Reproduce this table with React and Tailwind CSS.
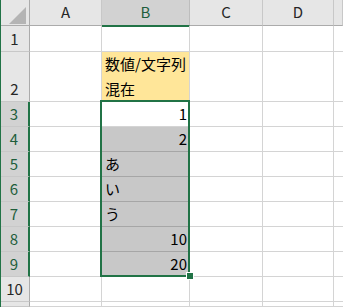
import React from "react";

const COLS = ["A", "B", "C", "D", ""];
const ROWS = [1, 2, 3, 4, 5, 6, 7, 8, 9, 10, 11];

// contents of column B, keyed by row number
const B = {
  2: { text: ["数値/文字列", "混在"], kind: "head" },
  3: { text: "1", num: true },
  4: { text: "2", num: true },
  5: { text: "あ" },
  6: { text: "い" },
  7: { text: "う" },
  8: { text: "10", num: true },
  9: { text: "20", num: true },
};

const selectedRow = (n) => n >= 3 && n <= 9;

function HeaderRow() {
  return (
    <>
      <div className="relative bg-[#e6e6e6] border-r border-b border-r-[#ababab] border-b-[#ababab]">
        <svg className="absolute left-[9px] top-[7px]" width="17" height="17" viewBox="0 0 17 17">
          <polygon points="17,0 17,17 0,17" fill="#b4b4b4" />
        </svg>
      </div>
      {COLS.map((c, i) => {
        const sel = c === "B";
        return (
          <div
            key={i}
            className={
              "flex items-center justify-center text-[15px] border-b border-r " +
              (sel
                ? "bg-[#d2d2d2] text-[#1e5e3b] border-r-[#bdbdbd] border-b-[#217346] shadow-[0_1px_0_#217346]"
                : "bg-[#e6e6e6] text-[#262626] border-r-[#c8c8c8] border-b-[#ababab]")
            }
          >
            {c}
          </div>
        );
      })}
    </>
  );
}

function BCell({ n }) {
  const d = B[n];
  const sel = n >= 4 && n <= 9;
  let bg = "";
  if (d && d.kind === "head") bg = "bg-[#ffe699]";
  else if (sel) bg = "bg-[#c8c8c8]";
  const line = sel && n < 9 ? "border-b-[#a6a6a6]" : "border-b-[#d4d4d4]";
  if (d && d.kind === "head") {
    return (
      <div className={"flex flex-col justify-end pl-[3px] text-[15px] leading-[25px] text-black border-r border-b border-r-[#d4d4d4] border-b-[#d4d4d4] " + bg}>
        {d.text.map((t) => (
          <div key={t}>{t}</div>
        ))}
      </div>
    );
  }
  return (
    <div
      className={
        "flex items-center text-[15px] text-black border-r border-b border-r-[#d4d4d4] " +
        line + " " + bg + " " +
        (d && d.num ? "justify-end pr-[2px]" : "justify-start pl-[3px]")
      }
    >
      {d ? d.text : null}
    </div>
  );
}

export default function App() {
  return (
    <div
      className="relative w-[343px] h-[307px] overflow-hidden bg-white"
      style={{ fontFamily: '"Noto Sans CJK JP", "Noto Sans", sans-serif' }}
    >
      <div className="grid grid-cols-[30px_72px_88px_73px_71px_1fr] grid-rows-[26px_26px_50px_repeat(8,25px)_5px]">
        <HeaderRow />
        {ROWS.map((n) => {
          const sel = selectedRow(n);
          return (
            <React.Fragment key={n}>
              <div
                className={
                  "flex items-end justify-center pb-[1px] text-[15px] leading-[22px] border-b border-b-[#c8c8c8] " +
                  (sel
                    ? "bg-[#d2d2d2] text-[#1e5e3b] border-r-2 border-r-[#217346]"
                    : "bg-[#e6e6e6] text-[#262626] border-r border-r-[#ababab]")
                }
              >
                {n < 11 ? n : null}
              </div>
              <div className="border-r border-b border-[#d4d4d4]" />
              <BCell n={n} />
              <div className="border-r border-b border-[#d4d4d4]" />
              <div className="border-r border-b border-[#d4d4d4]" />
              <div className="border-b border-[#d4d4d4]" />
            </React.Fragment>
          );
        })}
      </div>

      {/* window edge */}
      <div className="absolute left-0 top-0 bottom-0 w-px bg-[#217346]" />

      {/* selection range B3:B9 */}
      <div className="absolute left-[100px] top-[100px] w-[90px] h-[177px] border-2 border-[#217346]" />
      {/* fill handle */}
      <div className="absolute left-[187px] top-[273px] w-[6px] h-[6px] bg-[#217346] outline outline-1 outline-white" />
    </div>
  );
}
